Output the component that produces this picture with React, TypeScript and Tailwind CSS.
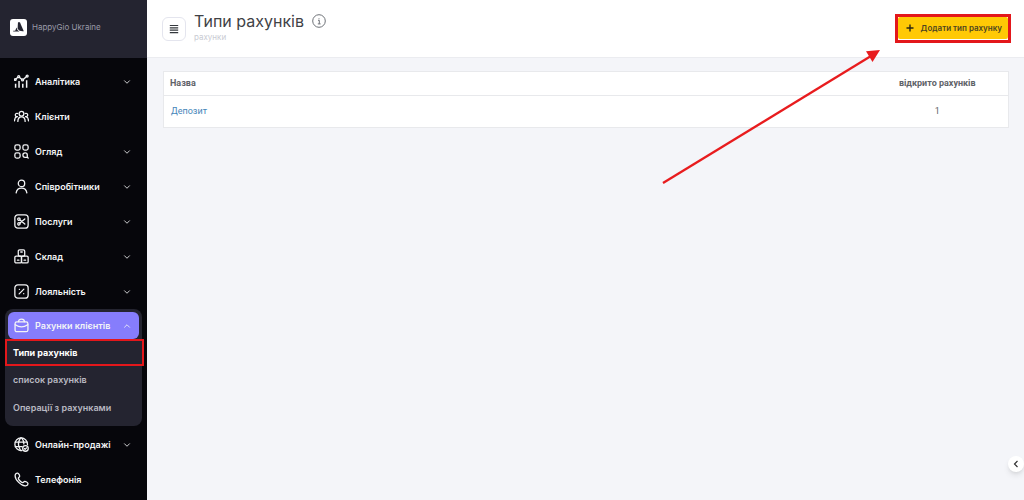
import { ReactNode } from "react";
import { FiChevronDown, FiChevronUp } from "react-icons/fi";

interface MenuItem {
  label: string;
  icon: ReactNode;
  expandable: boolean;
}

const Icon = ({ children }: { children: ReactNode }) => (
  <svg
    viewBox="0 0 14 14"
    className="size-[15px] shrink-0"
    fill="none"
    stroke="currentColor"
    strokeWidth="1.2"
    strokeLinecap="round"
    strokeLinejoin="round"
    aria-hidden="true"
  >
    {children}
  </svg>
);

const topItems: MenuItem[] = [
  {
    label: "Аналітика",
    expandable: true,
    icon: (
      <Icon>
        <path d="M1.9 4.6l1.6-1.5M5.2 3.2l1.9 1.7M8.9 4.9l2.5-2.4" />
        <circle cx="1.2" cy="5.2" r=".8" />
        <circle cx="4.4" cy="2.5" r=".9" />
        <circle cx="8" cy="5.5" r=".9" />
        <circle cx="12.3" cy="1.9" r=".9" />
        <path d="M1.5 12.8V9.2M4.7 12.8V6.6M8.2 12.8V9M11.8 12.8V5.8" strokeWidth="1.4" strokeLinecap="butt" />
      </Icon>
    ),
  },
  {
    label: "Клієнти",
    expandable: false,
    icon: (
      <Icon>
        <circle cx="7" cy="4.4" r="2.2" />
        <path d="M3.6 11.6c0-2.6 1.3-4.2 3.4-4.2s3.4 1.6 3.4 4.2" />
        <path d="M3.5 4.2a1.6 1.6 0 1 0-.3 3M.5 11c0-2 .6-3.4 2.4-3.8M10.5 4.2a1.6 1.6 0 1 1 .3 3M13.5 11c0-2-.6-3.4-2.4-3.8" />
      </Icon>
    ),
  },
  {
    label: "Огляд",
    expandable: true,
    icon: (
      <Icon>
        <rect x=".8" y=".8" width="4.9" height="4.9" rx="1.7" />
        <rect x="8.3" y=".8" width="4.9" height="4.9" rx="1.7" />
        <rect x=".8" y="8.3" width="4.9" height="4.9" rx="1.7" />
        <path d="M13.2 13.2L12.4 12v-1.8c0-1.1-.8-1.9-2-1.9s-2.1.8-2.1 2 .8 2.1 2 2.1h2.1" />
      </Icon>
    ),
  },
  {
    label: "Співробітники",
    expandable: true,
    icon: (
      <Icon>
        <circle cx="7" cy="4.1" r="3" />
        <path d="M2 13c.4-2.8 2.2-4.5 5-4.5s4.6 1.7 5 4.5" />
      </Icon>
    ),
  },
  {
    label: "Послуги",
    expandable: true,
    icon: (
      <Icon>
        <rect x=".8" y=".8" width="12.4" height="12.4" rx="2.8" />
        <circle cx="4.6" cy="4.8" r="1.1" />
        <circle cx="4.6" cy="9.2" r="1.1" />
        <path d="M5.5 5.5l4.6 3.9M5.5 8.5l4.6-3.9" />
      </Icon>
    ),
  },
  {
    label: "Склад",
    expandable: true,
    icon: (
      <Icon>
        <rect x="4" y=".8" width="6" height="5.8" rx="1.2" />
        <rect x=".8" y="6.6" width="6.2" height="6.4" rx="1.2" />
        <rect x="7" y="6.6" width="6.2" height="6.4" rx="1.2" />
        <path d="M6.3 2.8h1.4M3.2 10.4h1.4M9.4 10.4h1.4" />
      </Icon>
    ),
  },
  {
    label: "Лояльність",
    expandable: true,
    icon: (
      <Icon>
        <rect x=".8" y=".8" width="12.4" height="12.4" rx="2.8" />
        <path d="M9.2 4.8L4.8 9.2M5 5h.1M9 9h.1" />
      </Icon>
    ),
  },
];

const bottomItems: MenuItem[] = [
  {
    label: "Онлайн-продажі",
    expandable: true,
    icon: (
      <Icon>
        <path d="M7.4 12.6A5.9 5.9 0 1 1 12.6 7" />
        <path d="M1.2 4.7h11M1.2 9h6.4M6.2 12.6C3.7 9 3.7 4.4 6.2.9M7.2.9c1.4 1.8 2 3.7 2 5.6" />
        <circle cx="10.7" cy="10.7" r="2.6" />
        <path d="M9.7 10.8l.7.7 1.3-1.4" />
      </Icon>
    ),
  },
  {
    label: "Телефонія",
    expandable: false,
    icon: (
      <Icon>
        <path d="M1.2 2.6C1.5 1.6 2.5.9 3.4 1c.8.1 2 2.2 1.9 3-.1.8-1.3 1.1-1.2 1.9.2 1.4 2.6 3.8 4 4 .8.1 1.1-1.1 1.9-1.2.8-.1 2.9 1.1 3 1.9.1 1-.6 1.9-1.6 2.2C7.3 13.9.1 6.8 1.2 2.6z" />
      </Icon>
    ),
  },
];

const SidebarItem = ({ label, icon, expandable }: MenuItem) => (
  <button type="button" className="flex h-[35px] w-full items-center gap-1.5 pr-[15px] pl-3.5 text-left">
    {icon}
    <span className="flex-1 whitespace-nowrap">{label}</span>
    {expandable && <FiChevronDown className="size-2.5" />}
  </button>
);

const Sidebar = () => (
  <aside className="w-[147px] shrink-0 bg-[#06060b] text-[9px] font-semibold text-gray-100">
    <div className="flex h-[58px] items-center gap-[5px] bg-[#242430] pb-1 pl-2.5 text-[8px] font-normal text-[#9a9aa8]">
      <svg viewBox="0 0 17 17" className="size-[17px]" aria-hidden="true">
        <rect width="17" height="17" rx="3" fill="#fff" />
        <path d="M8 3.3h1.9l3.9 8.9q-4.3.6-6.2-2.4z" fill="#242430" />
        <path d="M6.5 8.5q.2 2.5 2.9 4H3.2v-.8h2z" fill="#242430" />
      </svg>
      HappyGio Ukraine
    </div>
    <nav className="pt-1.5">
      {topItems.map((item) => (
        <SidebarItem key={item.label} {...item} />
      ))}
      <div className="mx-[5px] mb-px rounded-lg bg-[#242430] pb-1">
        <div className="px-[3px] pt-[3px]">
          <button type="button" className="flex h-[27px] w-full items-center gap-1.5 rounded-md bg-[#867dfc] pr-[7px] pl-1.5 text-left">
            <Icon>
              <path d="M1 5.3C1 4.3 1.7 3.6 2.7 3.6h8.6c1 0 1.7.7 1.7 1.7v5.8c0 1-.7 1.7-1.7 1.7H2.7c-1 0-1.7-.7-1.7-1.7z" />
              <path d="M4.3 3.4c0-1.4 1-2.3 2.7-2.3s2.7.9 2.7 2.3M1.2 6.2C4.7 8.8 9.3 8.8 12.8 6.2" />
            </Icon>
            <span className="flex-1 whitespace-nowrap">Рахунки клієнтів</span>
            <FiChevronUp className="size-2.5" />
          </button>
        </div>
        <div className="relative">
          <a href="#types" className="flex h-[27px] items-center pl-2 font-bold text-white">
            Типи рахунків
          </a>
          <span className="pointer-events-none absolute inset-y-0 -right-0.5 left-0 border-2 border-[#e3171b]" />
        </div>
        <a href="#list" className="flex h-[27px] items-center pl-2 text-[#b9b9c2]">
          список рахунків
        </a>
        <a href="#operations" className="flex h-[29px] items-center pl-2 text-[#b9b9c2]">
          Операції з рахунками
        </a>
      </div>
      {bottomItems.map((item) => (
        <SidebarItem key={item.label} {...item} />
      ))}
    </nav>
  </aside>
);

const PageHeader = () => (
  <header className="flex h-[58px] items-center border-b border-[#ebecf0] bg-white pr-[13px] pl-[15px]">
    <button
      type="button"
      aria-label="Меню"
      className="flex size-6 items-center justify-center rounded-md border border-[#e4e5ee] text-[#34383d]"
    >
      <svg viewBox="0 0 10 10" className="size-2.5" stroke="currentColor" strokeWidth="1.2" aria-hidden="true">
        <path d="M.8 1.5h8.4M.8 3.9h8.4M.8 6.2h8.4M.8 8.6h8.4" />
      </svg>
    </button>
    <div className="ml-2 pb-1">
      <div className="flex items-center gap-2">
        <h1 className="text-[16px] leading-5 text-[#3f4246]">Типи рахунків</h1>
        <svg viewBox="0 0 14 14" className="size-3.5" fill="none" stroke="#6d7177" aria-hidden="true">
          <circle cx="7" cy="7" r="6.3" />
          <path d="M6 6.3h1.3v3.5M5.8 9.9h2.8M7 4.3v.9" />
        </svg>
      </div>
      <p className="text-[8px] leading-3 text-[#c9cbd3]">рахунки</p>
    </div>
    <div className="ml-auto border-[3px] border-[#e3171b] pb-px">
      <button
        type="button"
        className="flex h-[22px] items-center gap-[7px] rounded-xs bg-[#ffc905] pr-[6px] pl-2 text-[8px] font-semibold whitespace-nowrap text-[#4d4520]"
      >
        <svg viewBox="0 0 8 8" className="size-2" stroke="#2b2714" strokeWidth="1.4" aria-hidden="true">
          <path d="M4 .5v7M.5 4h7" />
        </svg>
        Додати тип рахунку
      </button>
    </div>
  </header>
);

const App = () => {
  return (
    <div className="relative flex h-screen overflow-hidden bg-[#f4f5f9] font-[Inter,sans-serif]">
      <Sidebar />
      <main className="min-w-0 flex-1">
        <PageHeader />
        <div className="pt-[13px] pr-[15px] pl-4">
          <table className="w-full border border-[#e8e9ec] bg-white font-[Roboto,sans-serif] text-[9px] text-[#5f6368]">
            <thead>
              <tr className="h-6 border-b border-[#e8e9ec]">
                <th className="pl-1.5 text-left font-bold">Назва</th>
                <th className="w-[142px] text-center font-bold">відкрито рахунків</th>
              </tr>
            </thead>
            <tbody>
              <tr className="h-8">
                <td className="pl-[7px]">
                  <a href="#deposit" className="text-[#4585b9]">Депозит</a>
                </td>
                <td className="text-center">1</td>
              </tr>
            </tbody>
          </table>
        </div>
      </main>
      <svg
        viewBox="0 0 220 136"
        className="pointer-events-none absolute top-[49px] right-[142px] h-[136px] w-[220px]"
        aria-hidden="true"
      >
        <path d="M1 134L209 7" stroke="#e81c1e" strokeWidth="2.3" />
        <path d="M218 1L204 2.3L210.5 13z" fill="#e81c1e" />
      </svg>
      <button
        type="button"
        aria-label="Відкрити панель"
        className="absolute right-0 bottom-7 flex size-4 items-center justify-center rounded-full bg-white text-[#333] shadow-md"
      >
        <svg viewBox="0 0 8 8" className="size-2" fill="none" stroke="currentColor" strokeWidth="1.2" aria-hidden="true">
          <path d="M5.5 1L2.500 4l3 3" />
        </svg>
      </button>
    </div>
  );
};

export default App;
